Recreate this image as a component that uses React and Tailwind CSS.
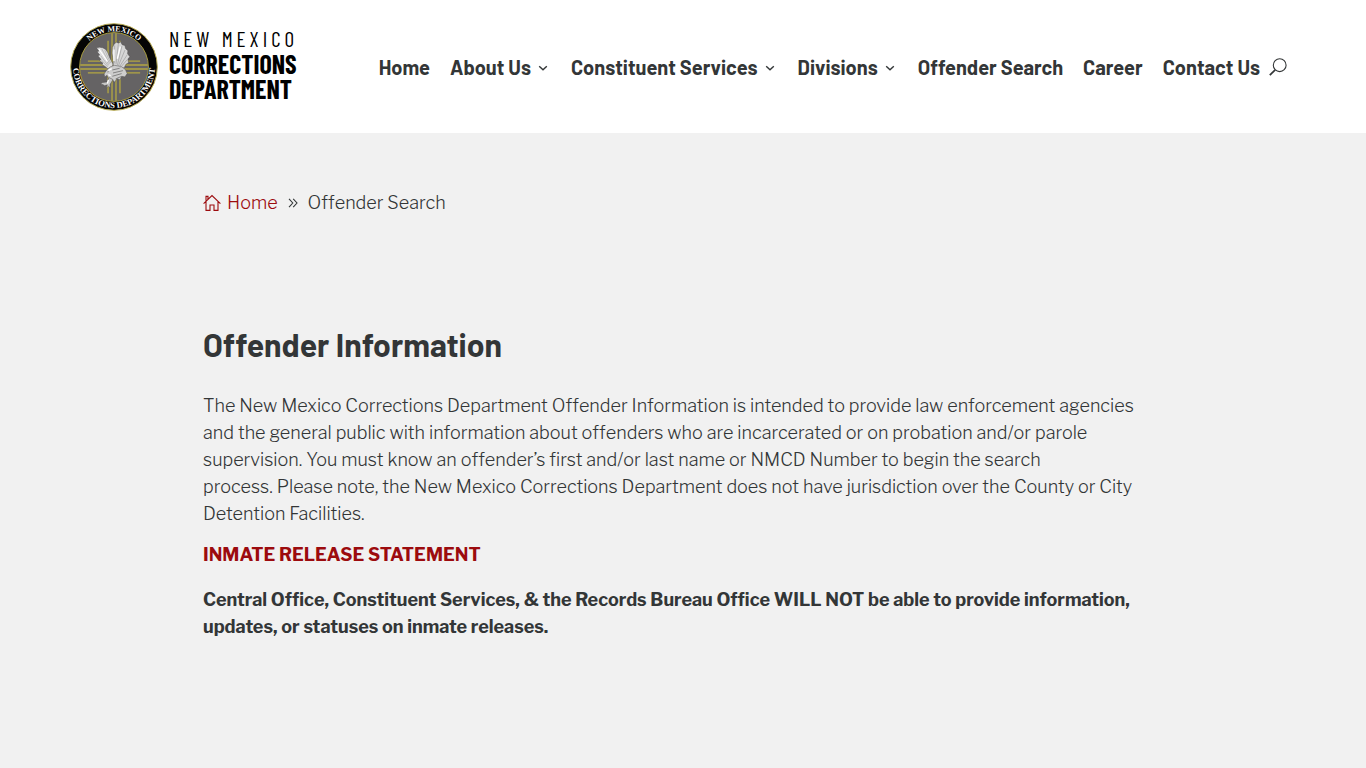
import React from 'react';

const navItems = [
  { label: 'Home' },
  { label: 'About Us', menu: true },
  { label: 'Constituent Services', menu: true },
  { label: 'Divisions', menu: true },
  { label: 'Offender Search' },
  { label: 'Career' },
  { label: 'Contact Us' },
];

const Seal = () => (
  <svg viewBox="30 22 266 266" className="h-[88px] w-[88px] shrink-0" aria-hidden="true">
    <defs>
      <path id="sealTop" d="M 55 155 A 108 108 0 0 1 271 155" />
      <path id="sealBottom" d="M 39 155 A 124 124 0 0 0 287 155" />
    </defs>
    <circle cx="163" cy="155" r="131" fill="#050505" stroke="#b9ac55" strokeWidth="3" />
    <circle cx="163" cy="155" r="104" fill="#656364" stroke="#a79b3e" strokeWidth="3" />

    {/* zia rays */}
    <g stroke="#b3a742" strokeWidth="4" fill="none">
      <path d="M145 76V234M157 53V257M169 53V257M181 76V234" />
      <path d="M84 137H242M61 149H265M61 161H265M84 173H242" />
    </g>

    {/* eagle: wings, body and tail, legs */}
    <g stroke="#4c4a4b" strokeWidth="1.5">
      <path d="M110 97L119 95L129 97L138 102L144 111L150 127L160 146L157 162L145 161L137 154L126 147L130 144L119 135L124 132L114 121L120 119L112 109L117 107Z" fill="#dedede" />
      <path d="M158 96L163 86L170 80L177 83L183 79L188 88L196 90L198 99L205 106L204 115L211 124L205 131L207 142L199 147L194 157L178 163L161 153L160 132L157 113Z" fill="#d6d6d6" />
      <path d="M141 164L151 155L164 150L184 153L197 162L203 175L196 185L186 183L181 194L172 190L165 201L158 193L147 190L142 180L135 185L133 176Z" fill="#cdcdcd" />
      <path d="M148 187L142 200L128 202L121 208L129 208L135 212L143 209L139 219L146 213L152 218L151 208L160 193Z" fill="#c6c6c6" />
    </g>
    <path d="M117 98L147 148M126 100L150 145M135 104L153 143M123 121L145 151M125 134L145 156" fill="none" stroke="#a6a6a6" strokeWidth="2" />
    <path d="M165 90L165 144M176 86L169 147M187 92L173 150M196 104L176 152M203 118L179 155M203 133L182 157" fill="none" stroke="#9b9b9b" strokeWidth="2" />
    <path d="M158 164L180 159M160 173L190 166M158 183L186 175M168 191L184 184M143 170L147 169" fill="none" stroke="#828282" strokeWidth="3" />
    <path d="M118 101L143 139M163 102L163 137M182 93L173 130M146 165L156 160M146 178L153 181M146 194L143 205" fill="none" stroke="#fff" strokeWidth="4" />

    <g fill="#fff" fontFamily="'Liberation Serif', serif" fontWeight="700" textAnchor="middle">
      <text fontSize="24">
        <textPath href="#sealTop" startOffset="50%">NEW MEXICO</textPath>
      </text>
      <text fontSize="26">
        <textPath href="#sealBottom" startOffset="50%">CORRECTIONS DEPARTMENT</textPath>
      </text>
    </g>
  </svg>
);

const Chevron = () => (
  <svg viewBox="0 0 10 10" className="mr-[3px] mt-[3px] h-[10px] w-[10px]" fill="none" stroke="currentColor" strokeWidth="1.4" aria-hidden="true">
    <path d="M1.2 3.2L5 6.8L8.8 3.2" />
  </svg>
);

const Header = () => (
  <header className="flex h-[133px] items-center justify-between bg-white pl-[70px] pr-[79px]">
    <a href="#" className="flex items-center gap-[11px] text-black">
      <Seal />
      <span className="flex flex-col pb-[6px] font-['Barlow_Condensed','Roboto',sans-serif] text-[26px] font-bold leading-[25px]">
        <span className="text-[21px] font-normal tracking-[4px]">NEW MEXICO</span>
        <span>CORRECTIONS</span>
        <span>DEPARTMENT</span>
      </span>
    </a>
    <nav className="flex items-center gap-[9px]">
      <ul className="flex items-center gap-[20px] font-['Barlow','Roboto',sans-serif] text-[20px] font-bold leading-[24px]">
        {navItems.map((item) => (
          <li key={item.label}>
            <a href="#" className="flex items-center gap-[7px] whitespace-nowrap">
              {item.label}
              {item.menu && <Chevron />}
            </a>
          </li>
        ))}
      </ul>
      <button type="button" aria-label="Search">
        <svg viewBox="0 0 18 18" className="h-[18px] w-[18px]" fill="none" stroke="currentColor" strokeWidth="1.1" aria-hidden="true">
          <circle cx="10.7" cy="7.2" r="6.4" />
          <path d="M6.2 11.8L.8 17.2" strokeWidth="1.7" />
        </svg>
      </button>
    </nav>
  </header>
);

const Breadcrumbs = () => (
  <div className="flex items-center text-[18px] leading-[27px]">
    <a href="#" className="flex items-center gap-[6px] text-[#9c0b0e]">
      <svg viewBox="0 0 18 18" className="h-[18px] w-[18px]" fill="none" stroke="currentColor" strokeWidth="1.1" aria-hidden="true">
        <path d="M.6 9.6L9 1.6L17.4 9.6M3 7.6V16.4H7V11H11V16.4H15V7.6M3 6.8V2.4H5V5" />
      </svg>
      Home
    </a>
    <svg viewBox="0 0 10 10" className="mx-[10px] h-[10px] w-[10px]" fill="none" stroke="currentColor" strokeWidth="1.1" aria-hidden="true">
      <path d="M1 .8L4.8 5L1 9.2M5.2 .8L9 5L5.2 9.2" />
    </svg>
    <span>Offender Search</span>
  </div>
);

const App = () => {
  return (
    <div className="min-h-screen bg-[#f1f1f1] font-['Libre_Franklin','Inter',sans-serif] text-[#333637]">
      <Header />
      <main className="mx-auto max-w-[960px] pt-[56px] text-[18px] font-light leading-[27px]">
        <Breadcrumbs />
        <h1 className="mt-[108px] font-['Barlow','Roboto',sans-serif] text-[32px] font-bold leading-[40px]">
          Offender Information
        </h1>
        <p className="mt-[28px]">
          The New Mexico Corrections Department Offender Information is intended to provide law enforcement agencies
          <br />
          and the general public with information about offenders who are incarcerated or on probation and/or parole
          <br />
          supervision. You must know an offender’s first and/or last name or NMCD Number to begin the search
          <br />
          process. Please note, the New Mexico Corrections Department does not have jurisdiction over the County or City
          <br />
          Detention Facilities.
        </p>
        <h2 className="mt-[14px] font-bold text-[#9c0b0e]">INMATE RELEASE STATEMENT</h2>
        <p className="mt-[18px] font-bold">
          Central Office, Constituent Services, &amp; the Records Bureau Office WILL NOT be able to provide information,
          <br />
          updates, or statuses on inmate releases.
        </p>
      </main>
    </div>
  );
};

export default App;
